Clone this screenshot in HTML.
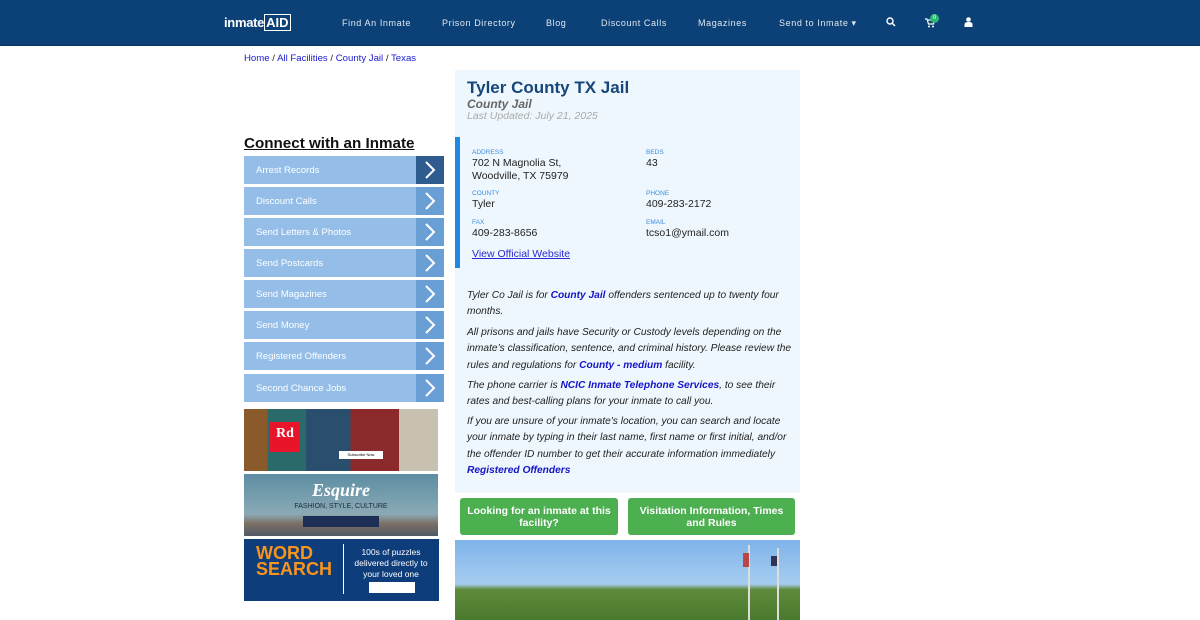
<!DOCTYPE html>
<html><head><meta charset="utf-8"><style>
*{margin:0;padding:0;box-sizing:border-box}
body{width:1200px;height:620px;overflow:hidden;background:#fff;font-family:"Liberation Sans",sans-serif;position:relative}
.nav{position:absolute;left:0;top:0;width:1200px;height:46px;background:#0b4176;border-bottom:1px solid #0a3563}
.nav span{position:absolute;top:18px;color:#dfe8f2;font-size:9px;letter-spacing:.6px}
.abs{position:absolute}
.side{position:absolute;left:244px;width:200px;height:28px;background:#94bee8;color:#fff;font-size:9.5px;padding:9px 12px}
.side i{position:absolute;right:0;top:0;width:28px;height:28px;background:#6a9fd6}
.side i svg{position:absolute;left:7px;top:5px}
.lbl{font-size:6.5px;color:#3e8ee0;position:absolute}
.val{font-size:10.5px;color:#222;position:absolute;line-height:12.5px}
.p{font-size:10.2px;font-style:italic;color:#222;line-height:16.3px;position:absolute;left:467px;white-space:nowrap}
.p b{color:#1515c8}
.btn{position:absolute;top:498px;height:37px;background:#4caf50;border-radius:3px;color:#fff;font-weight:bold;font-size:10.5px;text-align:center;line-height:12px;padding:6.5px 3px 0}
</style></head><body>
<div class="nav">
<div class="abs" style="left:224px;top:15px;color:#fff;font-size:13px;font-weight:bold;letter-spacing:-.3px">inmate<span style="position:static;font-size:13px;color:#fff;border:1px solid #fff;padding:0 1px;letter-spacing:0">AID</span></div>
<span style="left:342px">Find An Inmate</span>
<span style="left:442px">Prison Directory</span>
<span style="left:546px">Blog</span>
<span style="left:601px">Discount Calls</span>
<span style="left:698px">Magazines</span>
<span style="left:779px">Send to Inmate ▾</span>
<svg class="abs" style="left:886px;top:17px" width="10" height="10" viewBox="0 0 10 10"><circle cx="4" cy="4" r="3" stroke="#fff" stroke-width="1.4" fill="none"/><path d="M6 6l3 3" stroke="#fff" stroke-width="1.5"/></svg>
<svg class="abs" style="left:925px;top:18px" width="10" height="10" viewBox="0 0 10 10"><path d="M0 1h2l1.5 5h5l1-4H3" stroke="#fff" stroke-width="1.2" fill="none"/><circle cx="4" cy="8.5" r="1" fill="#fff"/><circle cx="8" cy="8.5" r="1" fill="#fff"/></svg>
<div class="abs" style="left:930px;top:14px;width:9px;height:9px;border-radius:50%;background:#2bb673;color:#fff;font-size:6px;text-align:center;line-height:9px">0</div>
<svg class="abs" style="left:964px;top:17px" width="9" height="10" viewBox="0 0 9 10"><circle cx="4.5" cy="2.5" r="2.3" fill="#fff"/><path d="M0.5 10v-2.5q0-2.5 4-2.5t4 2.5V10z" fill="#fff"/></svg>
</div>
<div class="abs" style="left:244px;top:53px;font-size:9.6px;color:#222"><span style="color:#1a1ad0">Home</span> / <span style="color:#1a1ad0">All Facilities</span> / <span style="color:#1a1ad0">County Jail</span> / <span style="color:#1a1ad0">Texas</span></div>
<div class="abs" style="left:244px;top:135px;font-size:15.2px;font-weight:bold;text-decoration:underline;color:#111">Connect with an Inmate</div>
<div class="side" style="top:156px">Arrest Records<i style="background:#2e5c8f"><svg width="14" height="18"><path d="M3 1l8 8-8 8" stroke="#fff" stroke-width="2" fill="none"/></svg></i></div>
<div class="side" style="top:187px">Discount Calls<i><svg width="14" height="18"><path d="M3 1l8 8-8 8" stroke="#fff" stroke-width="2" fill="none"/></svg></i></div>
<div class="side" style="top:218px">Send Letters &amp; Photos<i><svg width="14" height="18"><path d="M3 1l8 8-8 8" stroke="#fff" stroke-width="2" fill="none"/></svg></i></div>
<div class="side" style="top:249px">Send Postcards<i><svg width="14" height="18"><path d="M3 1l8 8-8 8" stroke="#fff" stroke-width="2" fill="none"/></svg></i></div>
<div class="side" style="top:280px">Send Magazines<i><svg width="14" height="18"><path d="M3 1l8 8-8 8" stroke="#fff" stroke-width="2" fill="none"/></svg></i></div>
<div class="side" style="top:311px">Send Money<i><svg width="14" height="18"><path d="M3 1l8 8-8 8" stroke="#fff" stroke-width="2" fill="none"/></svg></i></div>
<div class="side" style="top:342px">Registered Offenders<i><svg width="14" height="18"><path d="M3 1l8 8-8 8" stroke="#fff" stroke-width="2" fill="none"/></svg></i></div>
<div class="side" style="top:374px">Second Chance Jobs<i><svg width="14" height="18"><path d="M3 1l8 8-8 8" stroke="#fff" stroke-width="2" fill="none"/></svg></i></div>
<div class="abs" style="left:244px;top:409px;width:194px;height:62px;background:linear-gradient(90deg,#8a5a2a 0,#8a5a2a 12%,#2a6a6a 12%,#2a6a6a 32%,#2a4e6e 32%,#2a4e6e 55%,#8a2a2a 55%,#8a2a2a 80%,#c8c0b0 80%)">
<div class="abs" style="left:26px;top:13px;width:30px;height:30px;background:#e8142a;color:#fff;font:bold 14px 'Liberation Serif',serif;text-align:center;padding-top:4px">Rd</div>
<div class="abs" style="left:95px;top:42px;width:44px;height:8px;background:#fff;font-size:4px;text-align:center;line-height:8px">Subscribe Now</div></div>
<div class="abs" style="left:244px;top:474px;width:194px;height:62px;background:linear-gradient(180deg,#5d8da3 0,#8aaab5 65%,#7c6f64 80%,#4f5a66 100%)">
<div class="abs" style="left:0;width:194px;top:6px;text-align:center;color:#fff;font:bold italic 18px 'Liberation Serif',serif">Esquire</div>
<div class="abs" style="left:0;width:194px;top:29px;text-align:center;color:#1a2a44;font-size:7px">FASHION, STYLE, CULTURE</div>
<div class="abs" style="left:59px;top:42px;width:76px;height:11px;background:#1d2e57"></div></div>
<div class="abs" style="left:244px;top:539px;width:195px;height:62px;background:#0d3d7a">
<div class="abs" style="left:12px;top:6px;color:#f7941d;font-weight:bold;font-size:18px;line-height:16px">WORD<br>SEARCH</div>
<div class="abs" style="left:99px;top:5px;width:1px;height:50px;background:#fff"></div>
<div class="abs" style="left:102px;top:8px;width:90px;color:#fff;font-size:8.5px;text-align:center;line-height:11px">100s of puzzles delivered directly to your loved one</div>
<div class="abs" style="left:125px;top:43px;width:46px;height:11px;background:#fff"></div></div>
<div class="abs" style="left:455px;top:70px;width:345px;height:423px;background:#eef7fd"></div>
<div class="abs" style="left:467px;top:78px;font-size:17px;font-weight:bold;color:#16467a">Tyler County TX Jail</div>
<div class="abs" style="left:467px;top:97px;font-size:12px;font-weight:bold;font-style:italic;color:#666">County Jail</div>
<div class="abs" style="left:467px;top:110px;font-size:10.5px;font-style:italic;color:#aaa">Last Updated: July 21, 2025</div>
<div class="abs" style="left:455px;top:137px;width:5px;height:131px;background:#1e88e5"></div>
<div class="lbl" style="left:472px;top:149px">ADDRESS</div><div class="val" style="left:472px;top:157px">702 N Magnolia St,<br>Woodville, TX 75979</div>
<div class="lbl" style="left:646px;top:149px">BEDS</div><div class="val" style="left:646px;top:157px">43</div>
<div class="lbl" style="left:472px;top:190px">COUNTY</div><div class="val" style="left:472px;top:198px">Tyler</div>
<div class="lbl" style="left:646px;top:190px">PHONE</div><div class="val" style="left:646px;top:198px">409-283-2172</div>
<div class="lbl" style="left:472px;top:219px">FAX</div><div class="val" style="left:472px;top:227px">409-283-8656</div>
<div class="lbl" style="left:646px;top:219px">EMAIL</div><div class="val" style="left:646px;top:227px">tcso1@ymail.com</div>
<div class="val" style="left:472px;top:248px;color:#2a2ad0;text-decoration:underline">View Official Website</div>
<div class="p" style="top:288px">Tyler Co Jail is for <b>County Jail</b> offenders sentenced up to twenty four<br>months.</div>
<div class="p" style="top:325px">All prisons and jails have Security or Custody levels depending on the<br>inmate’s classification, sentence, and criminal history. Please review the<br>rules and regulations for <b>County - medium</b> facility.</div>
<div class="p" style="top:378px">The phone carrier is <b>NCIC Inmate Telephone Services</b>, to see their<br>rates and best-calling plans for your inmate to call you.</div>
<div class="p" style="top:414px">If you are unsure of your inmate's location, you can search and locate<br>your inmate by typing in their last name, first name or first initial, and/or<br>the offender ID number to get their accurate information immediately<br><b>Registered Offenders</b></div>
<div class="btn" style="left:460px;width:158px">Looking for an inmate at this facility?</div>
<div class="btn" style="left:628px;width:167px">Visitation Information, Times and Rules</div>
<div class="abs" style="left:455px;top:540px;width:345px;height:80px;background:linear-gradient(180deg,#7fb3ea 0,#a6cdf0 55%,#5e8a3a 62%,#4a7a2e 100%)"></div>
<div class="abs" style="left:748px;top:545px;width:2px;height:75px;background:#ddd"></div>
<div class="abs" style="left:777px;top:548px;width:2px;height:72px;background:#ddd"></div>
<div class="abs" style="left:743px;top:553px;width:6px;height:14px;background:#b44"></div>
<div class="abs" style="left:771px;top:556px;width:6px;height:10px;background:#335"></div>
</body></html>
